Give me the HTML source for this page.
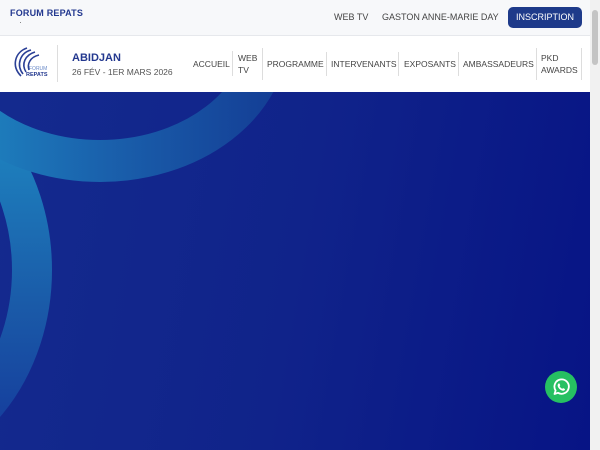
<!DOCTYPE html>
<html><head><meta charset="utf-8"><style>
*{margin:0;padding:0;box-sizing:border-box}
body{width:600px;height:450px;overflow:hidden;font-family:"Liberation Sans","DejaVu Sans",sans-serif;background:#fff;position:relative}
.top{position:absolute;left:0;top:0;width:590px;height:36px;background:#f7f8fa;border-bottom:1px solid #e6e8ec}
.brand{position:absolute;left:10px;top:8px;font-size:9px;font-weight:bold;color:#23388f;letter-spacing:.2px}
.dot{position:absolute;left:20px;top:22px;width:1px;height:1px;background:#888}
.tl{position:absolute;top:12px;font-size:9px;color:#444}
.btn{position:absolute;left:508px;top:7px;width:74px;height:21px;background:#1e3a8a;border-radius:5px;color:#fff;font-size:9px;text-align:center;line-height:21px}
.nav{position:absolute;left:0;top:36px;width:590px;height:56px;background:#fff}
.sep{position:absolute;width:1px;background:#ddd}
.city{position:absolute;left:72px;top:52px;font-size:11px;font-weight:bold;color:#23388f}
.date{position:absolute;left:72px;top:67px;font-size:8.5px;color:#555}
.ni{position:absolute;font-size:8.5px;color:#444;line-height:12px}
.hero{position:absolute;left:0;top:92px;width:590px;height:358px;background:linear-gradient(100deg,#142a8e 0%,#10238a 50%,#071485 100%);overflow:hidden}
.sb{position:absolute;left:590px;top:0;width:10px;height:450px;background:#f1f1f1}
.thumb{position:absolute;left:592px;top:10px;width:6px;height:55px;background:#c4c4c4;border-radius:3px}
.wa{position:absolute;left:545px;top:371px;width:32px;height:32px;border-radius:50%;background:#26c062}
</style></head><body>
<div class="top">
<div class="brand">FORUM REPATS</div><div class="dot"></div>
<div class="tl" style="left:334px">WEB TV</div>
<div class="tl" style="left:382px">GASTON ANNE-MARIE DAY</div>
<div class="btn">INSCRIPTION</div>
</div>
<div class="nav">
<svg style="position:absolute;left:9px;top:8px" width="42" height="40" viewBox="0 0 42 40">
<g fill="none" stroke="#2a3f96" stroke-width="1.6">
<path d="M18 4 C6 8 2 22 12 32"/><path d="M22 6 C11 9 7 21 14 30"/><path d="M26 8 C16 11 12 20 17 28"/><path d="M30 11 C21 13 18 20 20 26"/>
</g>
<text x="20" y="26" font-size="5" fill="#6a8ac8" font-family="Liberation Sans">FORUM</text>
<text x="17" y="32" font-size="5.5" fill="#23388f" font-weight="bold" font-family="Liberation Sans">REPATS</text>
</svg>
<div class="sep" style="left:57px;top:9px;height:37px"></div>
<div class="ni" style="left:193px;top:22px">ACCUEIL</div>
<div class="sep" style="left:232px;top:15px;height:25px"></div>
<div class="ni" style="left:238px;top:16px">WEB<br>TV</div>
<div class="sep" style="left:262px;top:12px;height:32px"></div>
<div class="ni" style="left:267px;top:22px">PROGRAMME</div>
<div class="sep" style="left:326px;top:16px;height:24px"></div>
<div class="ni" style="left:331px;top:22px">INTERVENANTS</div>
<div class="sep" style="left:398px;top:16px;height:24px"></div>
<div class="ni" style="left:404px;top:22px">EXPOSANTS</div>
<div class="sep" style="left:458px;top:16px;height:24px"></div>
<div class="ni" style="left:463px;top:22px">AMBASSADEURS</div>
<div class="sep" style="left:536px;top:12px;height:32px"></div>
<div class="ni" style="left:541px;top:16px">PKD<br>AWARDS</div>
<div class="sep" style="left:581px;top:12px;height:32px"></div>
</div>
<div class="city">ABIDJAN</div>
<div class="date">26 FÉV - 1ER MARS 2026</div>
<div class="hero">
<svg width="590" height="358" style="position:absolute;left:0;top:0">
<defs>
<linearGradient id="g1" x1="0" y1="0" x2="1" y2="0"><stop offset="0" stop-color="#1f8cc4"/><stop offset=".5" stop-color="#1a62ad"/><stop offset="1" stop-color="#143f96"/></linearGradient>
<linearGradient id="g2" x1="0" y1="0" x2="0" y2="1"><stop offset="0" stop-color="#1f90c6"/><stop offset=".6" stop-color="#1a5aa8"/><stop offset="1" stop-color="#14379a"/></linearGradient>
</defs>
<ellipse cx="-120" cy="178" rx="152" ry="185" fill="none" stroke="url(#g2)" stroke-width="40"/>
<ellipse cx="100" cy="-60" rx="168" ry="129" fill="none" stroke="url(#g1)" stroke-width="42"/>
</svg>
</div>
<div class="wa"><svg width="32" height="32" viewBox="0 0 32 32"><path d="M9.5 23 L10.6 19.5 A7.2 7.2 0 1 1 13 21.8 Z" fill="none" stroke="#fff" stroke-width="1.8" stroke-linejoin="round"/><path d="M13.3 12.8 c.5-.6 1-.5 1.3 0 l.6 1.3 c.1.4-.4.8-.6 1.1 .6 1.2 1.6 2.1 2.7 2.6 .3-.3.7-.8 1.1-.6 l1.3.7 c.4.3.4.8-.1 1.3 -.8.8-2 .7-3.2.1 -1.6-.8-2.8-2-3.5-3.6 -.4-1-.4-2.1.4-2.9z" fill="#fff"/></svg></div>
<div class="sb"></div><div class="thumb"></div>
</body></html>
